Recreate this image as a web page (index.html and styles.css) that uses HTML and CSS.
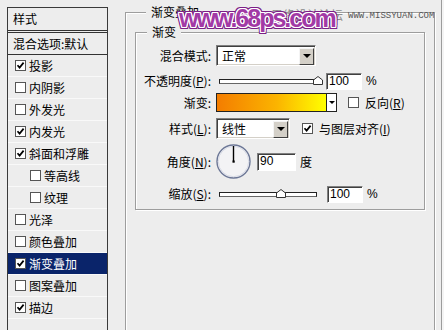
FILE: index.html
```html
<!DOCTYPE html>
<html lang="zh-CN">
<head>
<meta charset="utf-8">
<title>图层样式 - 渐变叠加</title>
<link rel="stylesheet" href="styles.css">
</head>
<body>
<div class="dialog">
  <aside class="styles-panel">
    <div class="panel-head">样式</div>
    <div class="blend-row">混合选项:默认</div>
    <ul class="style-list">
      <li class="item"><span class="cb"><svg viewBox="0 0 9 9"><polyline points="1.5,4.2 3.6,6.6 7.6,1.6"/></svg></span>投影</li>
      <li class="item"><span class="cb"></span>内阴影</li>
      <li class="item"><span class="cb"></span>外发光</li>
      <li class="item"><span class="cb"><svg viewBox="0 0 9 9"><polyline points="1.5,4.2 3.6,6.6 7.6,1.6"/></svg></span>内发光</li>
      <li class="item"><span class="cb"><svg viewBox="0 0 9 9"><polyline points="1.5,4.2 3.6,6.6 7.6,1.6"/></svg></span>斜面和浮雕</li>
      <li class="item sub"><span class="cb"></span>等高线</li>
      <li class="item sub"><span class="cb"></span>纹理</li>
      <li class="item"><span class="cb"></span>光泽</li>
      <li class="item"><span class="cb"></span>颜色叠加</li>
      <li class="item active"><span class="cb"><svg viewBox="0 0 9 9"><polyline points="1.5,4.2 3.6,6.6 7.6,1.6"/></svg></span>渐变叠加</li>
      <li class="item"><span class="cb"></span>图案叠加</li>
      <li class="item"><span class="cb"><svg viewBox="0 0 9 9"><polyline points="1.5,4.2 3.6,6.6 7.6,1.6"/></svg></span>描边</li>
    </ul>
  </aside>

  <main class="content">
    <fieldset class="group outer">
      <legend>渐变叠加</legend>
      <fieldset class="group inner">
        <legend>渐变</legend>

        <div class="row r1">
          <span class="lbl">混合模式:</span>
          <div class="select wide"><span class="val">正常</span><span class="btn"><i class="tri"></i></span></div>
        </div>

        <div class="row r2">
          <span class="lbl">不透明度(<u>P</u>):</span>
          <div class="slider"><div class="track"></div><svg class="thumb" style="left:94px" viewBox="0 0 10 9"><polygon points="0.5,8.5 0.5,4 5,0.5 9.5,4 9.5,8.5"/></svg></div>
          <div class="num n1">100</div>
          <span class="unit">%</span>
        </div>

        <div class="row r3">
          <span class="lbl">渐变:</span>
          <div class="gradient"><div class="ramp"></div><div class="garrow"><i class="tri small"></i></div></div>
          <span class="cb form-cb c1"></span>
          <span class="cb-text">反向(<u>R</u>)</span>
        </div>

        <div class="row r4">
          <span class="lbl">样式(<u>L</u>):</span>
          <div class="select narrow"><span class="val">线性</span><span class="btn"><i class="tri"></i></span></div>
          <span class="cb form-cb c2"><svg viewBox="0 0 9 9"><polyline points="1.5,4.2 3.6,6.6 7.6,1.6"/></svg></span>
          <span class="cb-text">与图层对齐(<u>I</u>)</span>
        </div>

        <div class="row r5">
          <span class="lbl">角度(<u>N</u>):</span>
          <svg class="dial" viewBox="0 0 36 36">
            <circle cx="17.5" cy="17.5" r="16.5" class="ring"/>
            <circle cx="17.5" cy="17.5" r="15.2" class="ring-in"/>
            <line x1="17.5" y1="2" x2="17.5" y2="17.5" class="hand"/>
            <rect x="16.5" y="16.5" width="2.2" height="2.2" class="dot"/>
          </svg>
          <div class="num n2">90</div>
          <span class="unit deg">度</span>
        </div>

        <div class="row r6">
          <span class="lbl">缩放(<u>S</u>):</span>
          <div class="slider"><div class="track"></div><svg class="thumb" style="left:57px" viewBox="0 0 10 9"><polygon points="0.5,8.5 0.5,4 5,0.5 9.5,4 9.5,8.5"/></svg></div>
          <div class="num n3">100</div>
          <span class="unit">%</span>
        </div>
      </fieldset>
    </fieldset>
  </main>

  <div class="edge"></div>

  <div class="wm-cn">思缘设计论坛</div>
  <div class="wm-url">WWW.MISSYUAN.COM</div>
  <div class="wm-main">www.68ps.com</div>
</div>
</body>
</html>
```
FILE: styles.css
```css
* { box-sizing: border-box; }
html, body { margin: 0; padding: 0; }
body {
  width: 444px;
  height: 330px;
  overflow: hidden;
  background: #ededed;
  color: #000;
  font: 12px/14px "Noto Sans CJK SC", "Liberation Sans", sans-serif;
}
.dialog {
  position: relative;
  display: flex;
  height: 330px;
  overflow: hidden;
}

/* left style list */
.styles-panel {
  flex: none;
  margin: 7px 0 0 7px;
  width: 101px;
  height: 323px;
  border: 1px solid #3a3a3a;
  border-bottom: none;
  background: #ededed;
}
.panel-head {
  height: 22px;
  padding-left: 5px;
  display: flex;
  align-items: center;
}
.blend-row {
  height: 25px;
  padding-left: 5px;
  display: flex;
  align-items: center;
  border-top: 3px double #333;
  border-bottom: 1px solid #333;
}
.style-list {
  list-style: none;
  margin: 0;
  padding: 0;
}
.item {
  height: 22px;
  padding-left: 7px;
  display: flex;
  align-items: center;
  gap: 2px;
  border-bottom: 1px solid #f9f9f9;
}
.item.sub { padding-left: 22px; }
.item.active {
  background: #0a246a;
  color: #fff;
}
.cb {
  flex: none;
  width: 11px;
  height: 11px;
  background: #fff;
  border: 1px solid #555;
  display: flex;
  align-items: center;
  justify-content: center;
  margin-right: 1px;
}
.cb svg {
  width: 9px;
  height: 9px;
  display: block;
}
.cb polyline {
  fill: none;
  stroke: #000;
  stroke-width: 1.7;
}

/* right content */
.content {
  flex: none;
  padding-left: 17px;
}
.group {
  margin: 0;
  min-width: 0;
  border: 1px solid #9d9d9d;
  box-shadow: inset 1px 1px 0 #fff, 1px 1px 0 #fff;
}
.group > legend {
  margin-left: 11px;
  padding: 0 5px;
  line-height: 14px;
  background: #ededed;
}
.outer {
  margin-top: 5px;
  width: 310px;
  height: 335px;
  padding: 0 0 0 9px;
}
.inner {
  margin-top: 6px;
  width: 290px;
  padding: 6px 0 7px 0;
}
.row {
  display: flex;
  align-items: center;
}
.r1 { height: 21px; }
.r2 { height: 16px; margin-top: 7px; }
.r3 { height: 19px; margin-top: 4px; }
.r4 { height: 21px; margin-top: 6px; }
.r5 { height: 35px; margin-top: 5px; }
.r6 { height: 16px; margin-top: 7px; }
.lbl {
  flex: none;
  width: 75px;
  margin-right: 5px;
  text-align: right;
  white-space: nowrap;
}
u { text-decoration: underline; text-underline-offset: 1px; }

.select {
  flex: none;
  height: 21px;
  background: #fff;
  border: 1px solid;
  border-color: #808080 #fff #fff #808080;
  box-shadow: inset 1px 1px 0 #404040, inset -1px -1px 0 #d4d0c8;
  display: flex;
  align-items: center;
  padding: 2px 1px 1px 2px;
}
.select.wide { width: 100px; }
.select.narrow { width: 74px; }
.select .val { flex: 1; padding-left: 3px; }
.select .btn {
  flex: none;
  width: 15px;
  height: 17px;
  background: #d4d0c8;
  border: 1px solid;
  border-color: #f4f4f4 #404040 #404040 #f4f4f4;
  display: flex;
  align-items: center;
  justify-content: center;
}
.tri {
  display: block;
  width: 0;
  height: 0;
  border-left: 4px solid transparent;
  border-right: 4px solid transparent;
  border-top: 4px solid #000;
}
.tri.small {
  border-left-width: 3px;
  border-right-width: 3px;
  border-top-width: 3px;
}

.slider {
  flex: none;
  position: relative;
  width: 101px;
  height: 16px;
  margin-left: 3px;
}
.track {
  position: absolute;
  left: 0;
  top: 6px;
  width: 98px;
  height: 5px;
  background: #fff;
  border: 1px solid #222;
  border-bottom-color: #666;
}
.thumb {
  position: absolute;
  top: 3px;
  width: 10px;
  height: 9px;
}
.thumb polygon {
  fill: #fff;
  stroke: #333;
  stroke-width: 1;
}

.num {
  flex: none;
  height: 17px;
  background: #fff;
  border: 1px solid;
  border-color: #808080 #fff #fff #808080;
  box-shadow: inset 1px 1px 0 #404040;
  font: 12px/15px "Liberation Sans", sans-serif;
  padding-left: 2px;
}
.n1 { width: 36px; margin-left: 6px; }
.n2 { width: 39px; height: 18px; margin-left: 5px; }
.n3 { width: 36px; margin-left: 7px; }
.unit {
  margin-left: 4px;
  font-family: "Liberation Sans", sans-serif;
}
.unit.deg {
  margin-left: 4px;
  font-family: "Noto Sans CJK SC", sans-serif;
}

.gradient {
  flex: none;
  width: 121px;
  height: 19px;
  border: 1px solid #222;
  display: flex;
  background: #fff;
}
.ramp {
  flex: 1;
  background: linear-gradient(to right, #f47d00, #fbb400 55%, #ffff00);
}
.garrow {
  flex: none;
  width: 10px;
  border-left: 1px solid #222;
  display: flex;
  align-items: center;
  justify-content: center;
}
.form-cb.c1 { margin-left: 11px; }
.form-cb.c2 { margin-left: 12px; }
.cb-text { margin-left: 5px; white-space: nowrap; }

.dial {
  flex: none;
  width: 36px;
  height: 36px;
}
.dial .ring {
  fill: #f3f3f5;
  stroke: #6c7796;
  stroke-width: 1.4;
}
.dial .ring-in {
  fill: none;
  stroke: #d8dbe6;
  stroke-width: 1;
}
.dial .hand {
  stroke: #000;
  stroke-width: 1.4;
}
.dial .dot { fill: #000; }

.edge {
  margin-left: auto;
  width: 3px;
  height: 330px;
  border-left: 1px solid #9c9c9c;
  background: #f4f4f4;
}

/* watermark overlay */
.wm-cn {
  position: absolute;
  left: 271px;
  top: 8px;
  font: 12px/14px "Noto Sans CJK SC", sans-serif;
  color: #8a8a8a;
}
.wm-url {
  position: absolute;
  left: 348px;
  top: 11px;
  font: 9px/10px "Liberation Mono", monospace;
  color: #555;
}
.wm-main {
  position: absolute;
  left: 179px;
  top: 6px;
  font: bold 25px/25px "Liberation Sans", sans-serif;
  letter-spacing: -2px;
  color: #a23aa6;
  text-shadow:
    1px 0 0 #fff, -1px 0 0 #fff, 0 1px 0 #fff, 0 -1px 0 #fff,
    1px 1px 0 #fff, -1px -1px 0 #fff, 1px -1px 0 #fff, -1px 1px 0 #fff,
    2px 0 0 #7b1f86, -2px 0 0 #7b1f86, 0 2px 0 #7b1f86, 0 -2px 0 #7b1f86,
    2px 2px 0 #7b1f86, -2px -2px 0 #7b1f86, 2px -2px 0 #7b1f86, -2px 2px 0 #7b1f86;
}
```
